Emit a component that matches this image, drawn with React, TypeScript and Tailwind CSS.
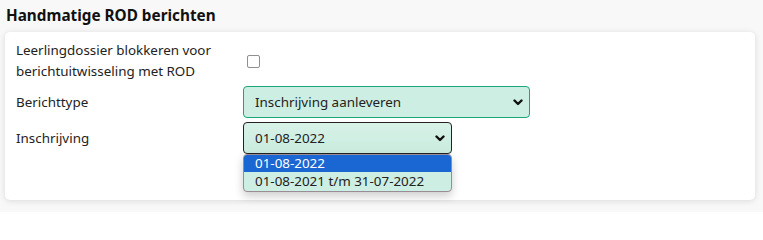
const Chevron = () => (
  <svg viewBox="0 0 10 7" className="h-[7px] w-[10px]" fill="none" stroke="#111" strokeWidth="2.4" strokeLinecap="round" strokeLinejoin="round">
    <path d="M1.5 1.5 L5 5 L8.5 1.5" />
  </svg>
);

export default function App() {
  return (
    <div className="min-h-[212px] w-[763px] bg-[#f8f8f8] text-[#222] font-['Noto_Sans',sans-serif]">
      <h2 className="px-[6px] pt-[4px] text-[15.3px] leading-[22px] font-bold text-[#111]">Handmatige ROD berichten</h2>
      <div className="mx-[5px] mt-[6px] h-[168px] w-[750px] rounded-[5px] bg-white px-[11px] pt-[8px] shadow-[0_1px_6px_rgba(0,0,0,0.12)]">
        <div className="grid grid-cols-[227px_287px] items-center gap-y-[4px] text-[13.4px]">
          <div className="leading-[21px]">Leerlingdossier blokkeren voor<br />berichtuitwisseling met ROD</div>
          <div className="flex items-center pl-[4px]">
            <span className="h-[13px] w-[13px] rounded-[2px] border border-[#8f8f8f] bg-white" />
          </div>

          <div>Berichttype</div>
          <div className="flex h-[32px] items-center justify-between rounded-[4px] border border-[#19a67a] bg-[#cdeee2] pl-[11px] pr-[6px]">
            <span>Inschrijving aanleveren</span>
            <Chevron />
          </div>

          <div>Inschrijving</div>
          <div className="relative w-[209px]">
            <div className="flex h-[32px] items-center justify-between rounded-[4px] border border-[#222] bg-gradient-to-b from-[#d8f2e8] to-[#c9ebde] pl-[11px] pr-[6px]">
              <span>01-08-2022</span>
              <Chevron />
            </div>
            <div className="absolute left-0 top-[32px] w-[209px] overflow-hidden rounded-[4px] border border-[#9a8c94] bg-[#cdeee2] pb-[1px] shadow-[0_4px_10px_rgba(0,0,0,0.2)]">
              <div className="h-[17px] bg-[#1a66d2] pl-[11px] leading-[17px] text-white">01-08-2022</div>
              <div className="h-[18px] pl-[11px] leading-[18px]">01-08-2021 t/m 31-07-2022</div>
            </div>
          </div>
        </div>
      </div>
    </div>
  );
}
